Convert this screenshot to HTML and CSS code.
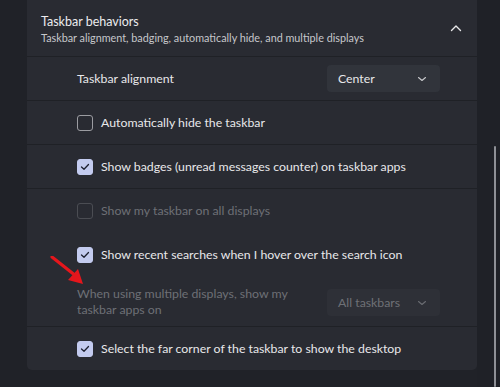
FILE: index.html
```html
<!DOCTYPE html>
<html>
<head>
<meta charset="utf-8">
<link rel="stylesheet" href="styles.css">
</head>
<body>
<div class="page">
  <div class="side"></div>
  <div class="card">
    <div class="header">
      <div class="htext">
        <div class="title">Taskbar behaviors</div>
        <div class="subtitle">Taskbar alignment, badging, automatically hide, and multiple displays</div>
      </div>
      <svg class="chev-up" width="12" height="8" viewBox="0 0 12 8"><path d="M1.5 6.5 L6 2 L10.5 6.5" fill="none" stroke="#e8e8ea" stroke-width="1.4" stroke-linecap="round" stroke-linejoin="round"/></svg>
    </div>
    <div class="row r43">
      <span class="label">Taskbar alignment</span>
      <div class="dropdown"><span>Center</span><svg width="10" height="6" viewBox="0 0 10 6"><path d="M1.5 1.5 L5 4.5 L8.5 1.5" fill="none" stroke="#c9cacd" stroke-width="1.1" stroke-linecap="round" stroke-linejoin="round"/></svg></div>
    </div>
    <div class="row r44">
      <span class="box"></span><span class="label">Automatically hide the taskbar</span>
    </div>
    <div class="row r44">
      <span class="box checked"><svg width="10" height="8" viewBox="0 0 10 8"><path d="M1.5 4 L4 6.3 L8.5 1.5" fill="none" stroke="#1d2030" stroke-width="1.3" stroke-linecap="round" stroke-linejoin="round"/></svg></span><span class="label">Show badges (unread messages counter) on taskbar apps</span>
    </div>
    <div class="row r44 noline">
      <span class="box disabled"></span><span class="label dim">Show my taskbar on all displays</span>
    </div>
    <div class="row r44 noline hover">
      <span class="box checked"><svg width="10" height="8" viewBox="0 0 10 8"><path d="M1.5 4 L4 6.3 L8.5 1.5" fill="none" stroke="#1d2030" stroke-width="1.3" stroke-linecap="round" stroke-linejoin="round"/></svg></span><span class="label">Show recent searches when I hover over the search icon</span>
    </div>
    <div class="row r50">
      <span class="label dim multi">When using multiple displays, show my taskbar apps on</span>
      <div class="dropdown disabled"><span>All taskbars</span><svg width="10" height="6" viewBox="0 0 10 6"><path d="M1.5 1.5 L5 4.5 L8.5 1.5" fill="none" stroke="#6a6c72" stroke-width="1.1" stroke-linecap="round" stroke-linejoin="round"/></svg></div>
    </div>
    <div class="row r43 last">
      <span class="box checked"><svg width="10" height="8" viewBox="0 0 10 8"><path d="M1.5 4 L4 6.3 L8.5 1.5" fill="none" stroke="#1d2030" stroke-width="1.3" stroke-linecap="round" stroke-linejoin="round"/></svg></span><span class="label">Select the far corner of the taskbar to show the desktop</span>
    </div>
  </div>
  <div class="rail"><div class="thumb"></div></div>
  <svg class="arrow" width="40" height="34" viewBox="0 0 40 34"><path d="M2 1 L26 20" stroke="#e5161c" stroke-width="3.2" stroke-linecap="round"/><path d="M33 28 L18 24 L28 13 Z" fill="#e5161c"/></svg>
</div>
</body>
</html>
```
FILE: styles.css
```css
html, body {
  margin: 0;
  padding: 0;
  background: #202228;
}
body {
  font-family: Lato, "Noto Sans", sans-serif;
  color: #e8e8ea;
  width: 500px;
  height: 387px;
  overflow: hidden;
}
.page {
  position: relative;
  display: flex;
  width: 500px;
  height: 387px;
}
.side {
  width: 27px;
  flex: none;
  background: #202228;
}
.card {
  width: 450px;
  flex: none;
  align-self: flex-start;
  background: #292b32;
  border-radius: 0 0 5px 5px;
  display: flex;
  flex-direction: column;
}
.header {
  height: 56px;
  border-bottom: 1px solid #1f2126;
  display: flex;
  align-items: center;
  padding: 0 15px 0 14px;
  box-sizing: content-box;
}
.htext {
  flex: 1;
  display: flex;
  flex-direction: column;
  gap: 1px;
  margin-top: 1px;
}
.title {
  font-size: 12.5px;
  line-height: 16px;
  color: #ececee;
}
.subtitle {
  font-size: 10.8px;
  line-height: 13px;
  color: #c6c7cb;
}
.row {
  display: flex;
  align-items: center;
  padding: 0 37px 0 50px;
  border-bottom: 1px solid #1f2126;
  box-sizing: border-box;
}
.row.noline { border-bottom-color: transparent; }
.row.last { border-bottom: none; }
.r43 { height: 44px; }
.r44 { height: 44px; }
.r50 { height: 50px; }
.row.last { height: 43px; }
.label {
  font-size: 12.3px;
  line-height: 16px;
  color: #e8e8ea;
  flex: 1;
}
.label.dim { color: #6e7076; }
.label.multi { max-width: 225px; padding-top: 1px; }
.box {
  width: 16px;
  height: 16px;
  box-sizing: border-box;
  border: 1px solid #9b9ca1;
  border-radius: 3px;
  margin-right: 8px;
  flex: none;
  display: flex;
  align-items: center;
  justify-content: center;
}
.box.disabled { border-color: #4b4d53; }
.box.checked {
  background: #c3cbef;
  border-color: #c3cbef;
}
.dropdown {
  width: 113px;
  height: 27px;
  box-sizing: border-box;
  background: #31343b;
  border-radius: 4px;
  display: flex;
  align-items: center;
  justify-content: space-between;
  padding: 0 13px 0 11px;
  font-size: 12.3px;
  color: #e8e8ea;
  flex: none;
  margin-left: auto;
}
.dropdown.disabled {
  background: #2e3037;
  color: #6e7076;
}
.r50 .dropdown { margin-top: 2px; }
.rail {
  flex: 1;
  background: #1f2127;
  position: relative;
}
.thumb {
  position: absolute;
  left: 17px;
  top: 146px;
  width: 2px;
  height: 241px;
  background: #8e9096;
  border-radius: 1px;
}
.arrow {
  position: absolute;
  left: 50px;
  top: 256px;
}
```
